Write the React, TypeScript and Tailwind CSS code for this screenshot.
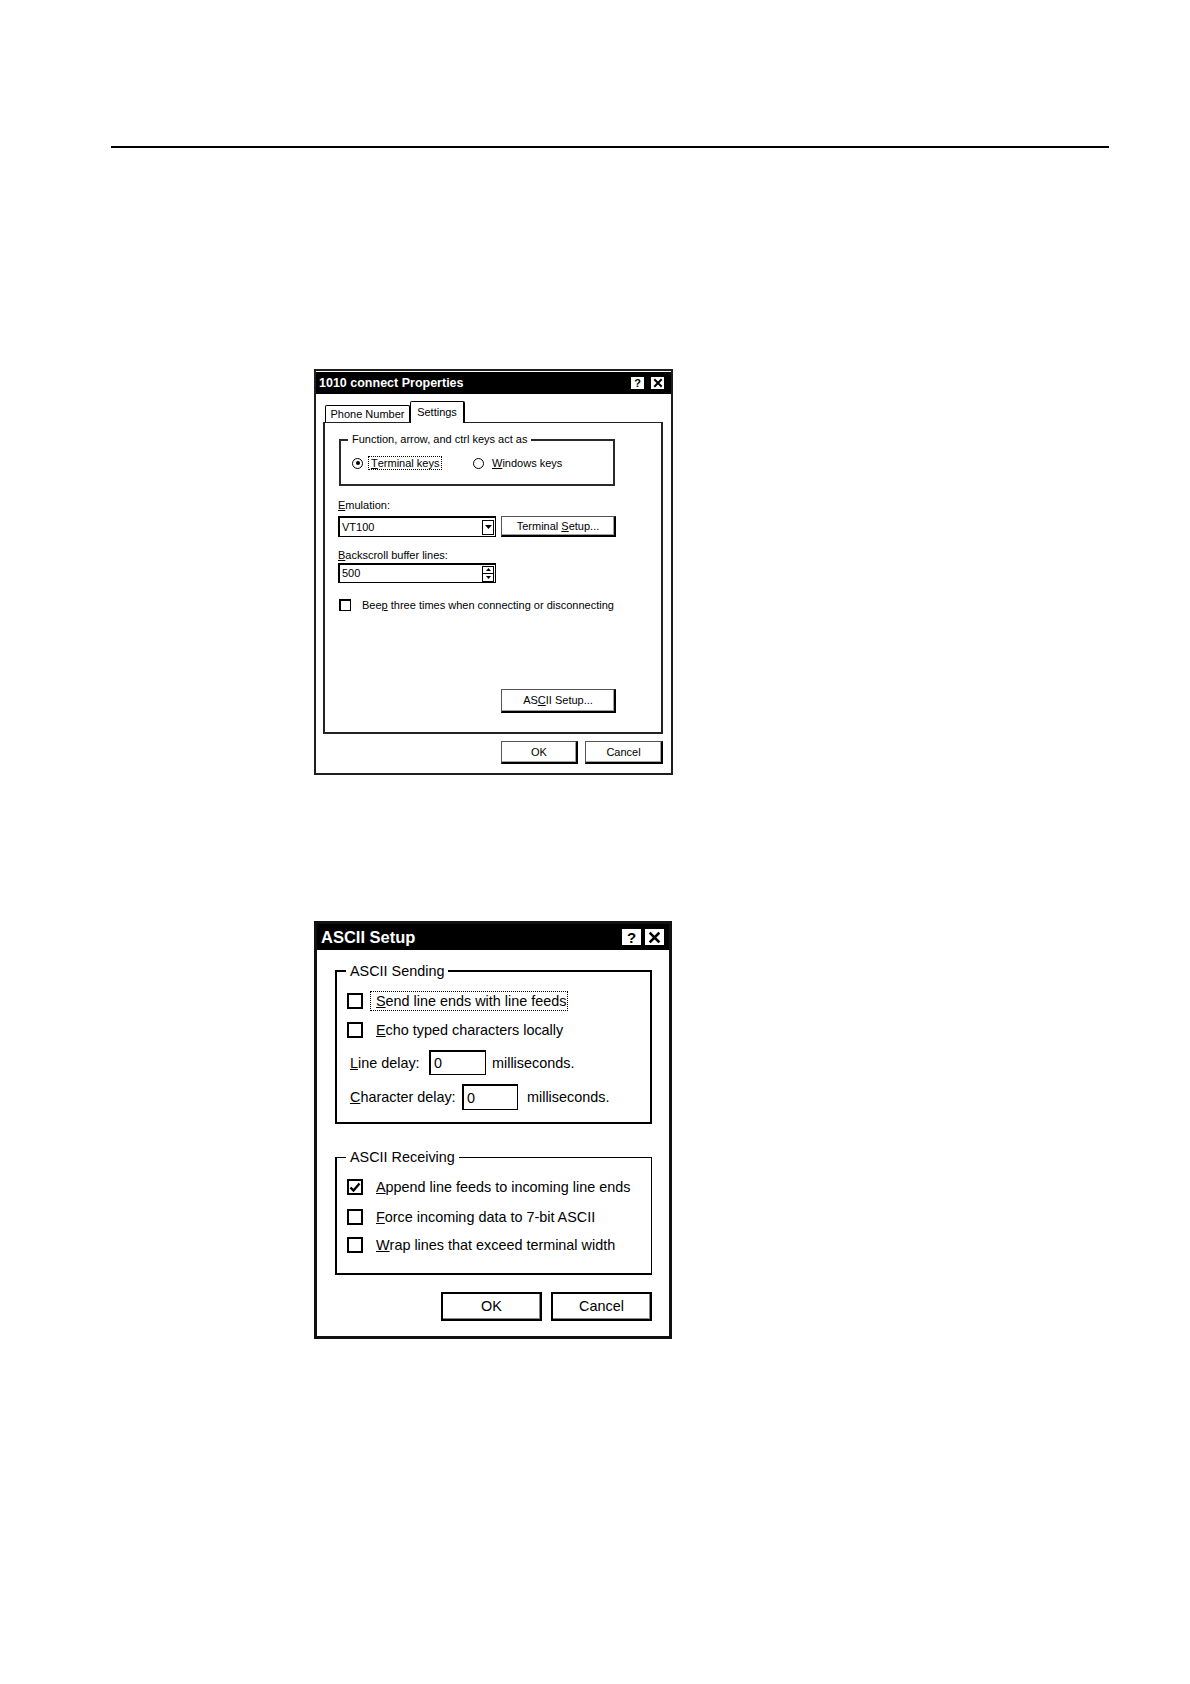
import React from 'react';

const sans = "font-['Liberation_Sans',Arial,Helvetica,sans-serif]";

function U({ children }: { children: React.ReactNode }) {
  return <span className="underline decoration-1 underline-offset-[1px]">{children}</span>;
}

function CloseGlyph({ size }: { size: number }) {
  return (
    <svg width={size} height={size} viewBox="0 0 10 10">
      <path d="M2 2 L8 8 M8 2 L2 8" stroke="black" strokeWidth="2" strokeLinecap="square" />
    </svg>
  );
}

function SmallButton({ className, children }: { className: string; children: React.ReactNode }) {
  return (
    <div
      className={`flex items-center justify-center bg-white border-t border-l border-[#555] border-r-2 border-b-2 border-r-black border-b-black shadow-[inset_-1px_-1px_0_#a0a0a0] text-[11px] leading-none ${className}`}
    >
      {children}
    </div>
  );
}

function BigButton({ className, children }: { className: string; children: React.ReactNode }) {
  return (
    <div
      className={`flex items-center justify-center bg-white border-2 border-black shadow-[inset_-1px_-1px_0_#888] text-[14.4px] leading-none ${className}`}
    >
      {children}
    </div>
  );
}

function PropertiesDialog() {
  return (
    <div className={`ml-[314px] mt-[221px] w-[359px] h-[406px] border-2 border-[#1e1e1e] bg-white pt-px flex flex-col text-black ${sans}`}>
      {/* title bar */}
      <div className="h-[22px] bg-black flex items-center justify-between pl-[3px] pr-[7px]">
        <span className="text-white font-bold text-[12.5px] leading-none">1010 connect Properties</span>
        <div className="flex items-center gap-[7px]">
          <div className="w-[13px] h-[12px] bg-white flex items-center justify-center text-[11px] font-bold leading-none">?</div>
          <div className="w-[13px] h-[12px] bg-white flex items-center justify-center">
            <CloseGlyph size={10} />
          </div>
        </div>
      </div>

      <div className="ml-[7px] w-[340px] mt-[7px]">
        {/* tabs */}
        <div className="h-[21px] flex items-end pl-[2px]">
          <div className="w-[85px] h-[17px] border-t border-l border-r border-black rounded-t-[2px] flex items-center justify-center text-[11px] leading-none">
            Phone Number
          </div>
          <div className="relative w-[55px] h-[22px] -mb-px bg-white border-t border-l border-r-2 border-black rounded-t-[2px] flex justify-center pt-[5px] text-[11px] leading-none">
            Settings
          </div>
        </div>

        {/* panel */}
        <div className="h-[312px] border-t border-x-2 border-b-2 border-[#222] flex flex-col text-[11px] leading-[13px]">
          <fieldset className="ml-[14px] mt-[10px] w-[276px] border-2 border-[#2a2a2a] p-0 pb-[14px]">
            <legend className="ml-[7px] px-[4px] leading-[13px]">Function, arrow, and ctrl keys act as</legend>
            <div className="mt-[10px] h-[14px] flex items-center pl-[11px]">
              <div className="w-[11px] h-[11px] rounded-full border border-black flex items-center justify-center">
                <div className="w-[4px] h-[4px] rounded-full bg-black" />
              </div>
              <span className="ml-[5px] w-[74px] h-[14px] border border-dotted border-black flex items-center pl-[2px]">
                <U>T</U>erminal keys
              </span>
              <div className="ml-[31px] w-[11px] h-[11px] rounded-full border border-black" />
              <span className="ml-[8px]">
                <U>W</U>indows keys
              </span>
            </div>
          </fieldset>

          <div className="ml-[13px] mt-[13px]">
            <U>E</U>mulation:
          </div>
          <div className="ml-[13px] mt-[4px] flex items-center">
            <div className="w-[158px] h-[21px] border-t-2 border-l-2 border-r border-b border-black flex items-center justify-between pl-[2px] pr-px">
              <span>VT100</span>
              <div className="w-[12px] h-[15px] border border-black flex items-center justify-center">
                <svg width="7" height="5" viewBox="0 0 7 5">
                  <path d="M0 0 H7 L3.5 4 Z" fill="black" />
                </svg>
              </div>
            </div>
            <SmallButton className="ml-[5px] w-[115px] h-[21px]">
              <span>
                Terminal <U>S</U>etup...
              </span>
            </SmallButton>
          </div>

          <div className="ml-[13px] mt-[12px]">
            <U>B</U>ackscroll buffer lines:
          </div>
          <div className="ml-[13px] mt-px w-[158px] h-[20px] border-t-2 border-l-2 border-r border-b border-black flex items-center justify-between pl-[2px] pr-px">
            <span>500</span>
            <div className="w-[12px] h-[16px] border border-black flex flex-col">
              <div className="flex-1 border-b border-black flex items-center justify-center">
                <svg width="5" height="3" viewBox="0 0 5 3">
                  <path d="M0 3 H5 L2.5 0 Z" fill="black" />
                </svg>
              </div>
              <div className="flex-1 flex items-center justify-center">
                <svg width="5" height="3" viewBox="0 0 5 3">
                  <path d="M0 0 H5 L2.5 3 Z" fill="black" />
                </svg>
              </div>
            </div>
          </div>

          <div className="ml-[14px] mt-[16px] h-[12px] flex items-center">
            <div className="w-[12px] h-[12px] border-t-2 border-l-2 border-r border-b border-black" />
            <span className="ml-[11px]">
              Bee<U>p</U> three times when connecting or disconnecting
            </span>
          </div>

          <SmallButton className="ml-[176px] mt-[78px] w-[115px] h-[24px]">
            <span>
              AS<U>C</U>II Setup...
            </span>
          </SmallButton>
        </div>

        {/* OK / Cancel */}
        <div className="mt-[7px] flex justify-end gap-[7px]">
          <SmallButton className="w-[77px] h-[23px]">OK</SmallButton>
          <SmallButton className="w-[78px] h-[23px]">Cancel</SmallButton>
        </div>
      </div>
    </div>
  );
}

function Check({ checked }: { checked?: boolean }) {
  return (
    <div className="w-[16px] h-[16px] shrink-0 border-2 border-black bg-white flex items-center justify-center">
      {checked && (
        <svg width="12" height="11" viewBox="0 0 12 11">
          <path d="M1.5 5.5 L4.5 8.5 L10.5 1.5" stroke="black" strokeWidth="2.4" fill="none" />
        </svg>
      )}
    </div>
  );
}

function CheckRow({
  className,
  checked,
  focused,
  children,
}: {
  className: string;
  checked?: boolean;
  focused?: boolean;
  children: React.ReactNode;
}) {
  return (
    <div className={`h-[20px] flex items-center pl-[10px] ${className}`}>
      <Check checked={checked} />
      <span
        className={`ml-[7px] h-[20px] flex items-center pl-[5px] pr-px border border-dotted ${focused ? 'border-black' : 'border-transparent'}`}
      >
        {children}
      </span>
    </div>
  );
}

function AsciiSetupDialog() {
  return (
    <div className={`ml-[314px] mt-[146px] w-[358px] h-[418px] border-[3px] border-[#111] bg-white flex flex-col text-black ${sans}`}>
      <div className="h-[26px] bg-black flex items-center justify-between pl-[4px] pr-[5px]">
        <span className="text-white font-bold text-[16.5px] leading-none">ASCII Setup</span>
        <div className="flex items-center gap-[4px]">
          <div className="w-[19px] h-[16px] bg-white flex items-center justify-center text-[15px] font-bold leading-none">?</div>
          <div className="w-[19px] h-[16px] bg-white flex items-center justify-center">
            <CloseGlyph size={13} />
          </div>
        </div>
      </div>

      <div className="text-[14.4px] leading-[16px]">
        <fieldset className="ml-[18px] mt-[13px] w-[317px] border-2 border-black p-0 pb-[12px]">
          <legend className="ml-[9px] px-[4px] leading-[16px]">ASCII Sending</legend>
          <CheckRow className="mt-[12px]" focused>
            <U>S</U>end line ends with line feeds
          </CheckRow>
          <CheckRow className="mt-[9px]">
            <U>E</U>cho typed characters locally
          </CheckRow>
          <div className="mt-[10px] h-[25px] flex items-center pl-[13px]">
            <span className="w-[79px]">
              <U>L</U>ine delay:
            </span>
            <div className="w-[57px] h-[25px] border-t-2 border-l-2 border-r border-b border-black flex items-center pl-[3px]">0</div>
            <span className="ml-[6px]">milliseconds.</span>
          </div>
          <div className="mt-[9px] h-[26px] flex items-center pl-[13px]">
            <span className="w-[112px]">
              <U>C</U>haracter delay:
            </span>
            <div className="w-[56px] h-[26px] border-t-2 border-l-2 border-r border-b border-black flex items-center pl-[3px]">0</div>
            <span className="ml-[9px]">milliseconds.</span>
          </div>
        </fieldset>

        <fieldset className="ml-[18px] mt-[25px] w-[317px] border-t border-r border-l-2 border-b-2 border-black p-0 pb-[18px]">
          <legend className="ml-[9px] px-[4px] leading-[16px]">ASCII Receiving</legend>
          <CheckRow className="mt-[12px]" checked>
            <U>A</U>ppend line feeds to incoming line ends
          </CheckRow>
          <CheckRow className="mt-[10px]">
            <U>F</U>orce incoming data to 7-bit ASCII
          </CheckRow>
          <CheckRow className="mt-[8px]">
            <U>W</U>rap lines that exceed terminal width
          </CheckRow>
        </fieldset>

        <div className="ml-[18px] w-[317px] mt-[17px] flex justify-end gap-[9px]">
          <BigButton className="w-[101px] h-[29px]">OK</BigButton>
          <BigButton className="w-[101px] h-[29px]">Cancel</BigButton>
        </div>
      </div>
    </div>
  );
}

export default function App() {
  return (
    <div className="w-[1190px] h-[1684px] bg-white pt-[146px] overflow-hidden">
      <div className="ml-[111px] w-[998px] h-[2px] bg-black" />
      <PropertiesDialog />
      <AsciiSetupDialog />
    </div>
  );
}
